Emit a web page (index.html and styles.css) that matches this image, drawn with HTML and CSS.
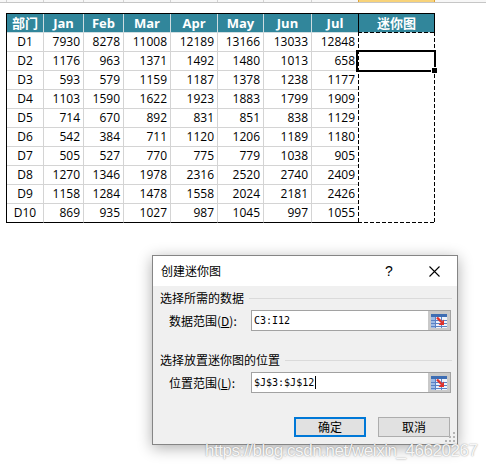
FILE: index.html
```html
<!DOCTYPE html>
<html lang="zh">
<head>
<meta charset="utf-8">
<title>创建迷你图</title>
<link rel="stylesheet" href="styles.css">
</head>
<body>
<div class="sheet">
  <div class="colbar">
    <span></span><span></span><span></span><span></span><span></span><span></span><span></span><span></span><span class="active"></span>
  </div>
  <div class="grid">
    <div class="cell hd">部门</div><div class="cell hd">Jan</div><div class="cell hd">Feb</div><div class="cell hd">Mar</div><div class="cell hd">Apr</div><div class="cell hd">May</div><div class="cell hd">Jun</div><div class="cell hd edge">Jul</div><div class="cell hd edge">迷你图</div>

    <div class="cell dept">D1</div><div class="cell">7930</div><div class="cell">8278</div><div class="cell">11008</div><div class="cell">12189</div><div class="cell">13166</div><div class="cell">13033</div><div class="cell jul">12848</div><div class="cell spark"></div>
    <div class="cell dept">D2</div><div class="cell">1176</div><div class="cell">963</div><div class="cell">1371</div><div class="cell">1492</div><div class="cell">1480</div><div class="cell">1013</div><div class="cell jul">658</div><div class="cell spark"></div>
    <div class="cell dept">D3</div><div class="cell">593</div><div class="cell">579</div><div class="cell">1159</div><div class="cell">1187</div><div class="cell">1378</div><div class="cell">1238</div><div class="cell jul">1177</div><div class="cell spark"></div>
    <div class="cell dept">D4</div><div class="cell">1103</div><div class="cell">1590</div><div class="cell">1622</div><div class="cell">1923</div><div class="cell">1883</div><div class="cell">1799</div><div class="cell jul">1909</div><div class="cell spark"></div>
    <div class="cell dept">D5</div><div class="cell">714</div><div class="cell">670</div><div class="cell">892</div><div class="cell">831</div><div class="cell">851</div><div class="cell">838</div><div class="cell jul">1129</div><div class="cell spark"></div>
    <div class="cell dept">D6</div><div class="cell">542</div><div class="cell">384</div><div class="cell">711</div><div class="cell">1120</div><div class="cell">1206</div><div class="cell">1189</div><div class="cell jul">1180</div><div class="cell spark"></div>
    <div class="cell dept">D7</div><div class="cell">505</div><div class="cell">527</div><div class="cell">770</div><div class="cell">775</div><div class="cell">779</div><div class="cell">1038</div><div class="cell jul">905</div><div class="cell spark"></div>
    <div class="cell dept">D8</div><div class="cell">1270</div><div class="cell">1346</div><div class="cell">1978</div><div class="cell">2316</div><div class="cell">2520</div><div class="cell">2740</div><div class="cell jul">2409</div><div class="cell spark"></div>
    <div class="cell dept">D9</div><div class="cell">1158</div><div class="cell">1284</div><div class="cell">1478</div><div class="cell">1558</div><div class="cell">2024</div><div class="cell">2181</div><div class="cell jul">2426</div><div class="cell spark"></div>
    <div class="cell dept last">D10</div><div class="cell last">869</div><div class="cell last">935</div><div class="cell last">1027</div><div class="cell last">987</div><div class="cell last">1045</div><div class="cell last">997</div><div class="cell jul last">1055</div><div class="cell spark last"></div>

    <div class="ants"></div>
    <div class="selection"><span class="handle"></span></div>
  </div>
</div>

<div class="dialog">
  <div class="titlebar">
    <span class="title">创建迷你图</span>
    <span class="help">?</span>
    <svg class="close" width="11" height="11" viewBox="0 0 11 11"><path d="M0.5 0.5L10.5 10.5M10.5 0.5L0.5 10.5" stroke="#000" stroke-width="1.1"/></svg>
  </div>
  <div class="dbody">
    <div class="group"><span>选择所需的数据</span><i class="rule"></i></div>
    <div class="field">
      <span class="label">数据范围(<u>D</u>):</span>
      <div class="input">
        <span class="val">C3:I12</span>
        <span class="picker">
          <svg width="16" height="14" viewBox="0 0 16 14"><rect width="16" height="14" fill="#eef3fb"/><rect width="16" height="3" fill="#3d6db3"/><rect y="3" width="4" height="11" fill="#9dbbe6"/><path d="M0 6.5H16M0 9.5H16M0 12.5H16M4.5 3V14M10.5 3V14" stroke="#5a82c4"/><path d="M6 3.5L10.5 8" stroke="#e0302a" stroke-width="2.4"/><path d="M13 5.5V11H7.5Z" fill="#e0302a"/></svg>
        </span>
      </div>
    </div>
    <div class="group g2"><span>选择放置迷你图的位置</span><i class="rule"></i></div>
    <div class="field">
      <span class="label">位置范围(<u>L</u>):</span>
      <div class="input">
        <span class="val">$J$3:$J$12<i class="caret"></i></span>
        <span class="picker">
          <svg width="16" height="14" viewBox="0 0 16 14"><rect width="16" height="14" fill="#eef3fb"/><rect width="16" height="3" fill="#3d6db3"/><rect y="3" width="4" height="11" fill="#9dbbe6"/><path d="M0 6.5H16M0 9.5H16M0 12.5H16M4.5 3V14M10.5 3V14" stroke="#5a82c4"/><path d="M6 3.5L10.5 8" stroke="#e0302a" stroke-width="2.4"/><path d="M13 5.5V11H7.5Z" fill="#e0302a"/></svg>
        </span>
      </div>
    </div>
    <div class="buttons">
      <button class="btn primary">确定</button>
      <button class="btn">取消</button>
    </div>
  </div>
  <svg class="grip" width="10" height="10" viewBox="0 0 10 10"><g fill="#b5b5b5"><rect x="8" y="0" width="2" height="2"/><rect x="4" y="4" width="2" height="2"/><rect x="8" y="4" width="2" height="2"/><rect x="0" y="8" width="2" height="2"/><rect x="4" y="8" width="2" height="2"/><rect x="8" y="8" width="2" height="2"/></g></svg>
</div>

<div class="watermark">https://blog.csdn.net/weixin_46620267</div>
</body>
</html>
```

FILE: styles.css
```css
html, body {
  margin: 0;
  padding: 0;
  background: #fff;
}

body {
  width: 486px;
  height: 470px;
  position: relative;
  overflow: hidden;
  font-family: "Noto Sans CJK SC", sans-serif;
}

.sheet {
  padding-left: 6px;
}

/* strip of the column header row above */
.colbar {
  display: grid;
  grid-template-columns: 38px 40px 40px 47px 47px 46px 48px 47px 76px;
  height: 3px;
  margin-left: -6px;
  padding-left: 6px;
  background: #f7f7f7;
  border-bottom: 1px solid #c6c6c6;
  box-sizing: border-box;
  width: 486px;
}

.colbar span {
  border-right: 1px solid #d2d2d2;
}

.colbar span:first-child {
  border-left: 1px solid #d2d2d2;
}

.colbar .active {
  background: #f8d37a;
  border-left: 1px solid #e1a232;
  border-right: 1px solid #e1a232;
  margin-left: -1px;
}

/* data table */
.grid {
  margin-top: 10px;
  display: grid;
  grid-template-columns: 37px 40px 40px 47px 47px 46px 48px 47px 76px;
  grid-auto-rows: 19px;
  width: max-content;
  border-left: 1px solid #000;
  border-top: 1px solid #000;
  position: relative;
  font-family: "Open Sans", "Noto Sans CJK SC", sans-serif;
  font-size: 12px;
  line-height: 18px;
  color: #000;
}

.cell {
  box-sizing: border-box;
  border-right: 1px solid #d4d4d4;
  border-bottom: 1px solid #d4d4d4;
  text-align: right;
  padding-right: 3px;
  white-space: nowrap;
}

.cell.hd {
  background: #31869b;
  color: #fff;
  font-weight: 700;
  font-size: 13px;
  text-align: center;
  padding: 0;
  border-right-color: #cfdde1;
  border-bottom-color: #cfdde1;
}

.cell.hd.edge {
  border-right-color: #000;
}

.cell.dept {
  text-align: center;
  padding: 0;
}

.cell.jul {
  border-right-color: #fff;
}

.cell.spark {
  border-right-color: #fff;
  border-bottom-color: #fff;
}

.cell.last {
  border-bottom-color: #000;
}

.cell.spark.last {
  border-bottom-color: #fff;
}

/* copy marquee around J3:J12 */
.ants {
  position: absolute;
  left: 351px;
  top: 18px;
  width: 77px;
  height: 191px;
  background:
    repeating-linear-gradient(90deg, #000 0 4px, transparent 4px 6px) left top / 100% 1px no-repeat,
    repeating-linear-gradient(90deg, #000 0 4px, transparent 4px 6px) left bottom / 100% 1px no-repeat,
    repeating-linear-gradient(180deg, #000 0 4px, transparent 4px 6px) left top / 1px 100% no-repeat,
    repeating-linear-gradient(180deg, #000 0 4px, transparent 4px 6px) right top / 1px 100% no-repeat;
}

/* active cell */
.selection {
  position: absolute;
  left: 349px;
  top: 36px;
  width: 80px;
  height: 22px;
  box-sizing: border-box;
  border: 2px solid #000;
}

.handle {
  position: absolute;
  right: -4px;
  bottom: -4px;
  width: 5px;
  height: 5px;
  background: #000;
  border: 1px solid #fff;
}

/* dialog window */
.dialog {
  position: absolute;
  left: 152px;
  top: 255px;
  width: 306px;
  height: 190px;
  box-sizing: border-box;
  border: 1px solid #858585;
  background: #f0f0f0;
  box-shadow: 0 3px 14px rgba(0, 0, 0, 0.32);
  font-size: 12px;
  color: #000;
}

.titlebar {
  height: 30px;
  background: #fff;
  display: flex;
  align-items: center;
  padding: 0 17px 0 8px;
}

.title {
  flex: 1;
  line-height: 16px;
}

.help {
  width: 12px;
  text-align: center;
  font-family: "Liberation Sans", sans-serif;
  font-size: 14px;
  margin-right: 34px;
}

.close {
  display: block;
}

.dbody {
  padding: 4px 5px 0 5px;
}

.group {
  display: flex;
  align-items: center;
  gap: 5px;
  height: 16px;
  line-height: 16px;
  padding-left: 2px;
}

.group.g2 {
  margin-top: 21px;
}

.rule {
  flex: 1;
  height: 1px;
  background: #dadada;
}

.field {
  display: flex;
  align-items: center;
  margin-top: 4px;
  padding-left: 11px;
  height: 21px;
}

.label {
  width: 82px;
  line-height: 16px;
  white-space: nowrap;
}

.input {
  width: 200px;
  height: 21px;
  box-sizing: border-box;
  border: 1px solid #a2a2a2;
  background: #fff;
  display: flex;
  align-items: stretch;
}

.val {
  flex: 1;
  font-family: "DejaVu Sans Mono", monospace;
  font-size: 10px;
  line-height: 19px;
  padding-left: 2px;
  display: flex;
  align-items: center;
}

.caret {
  width: 1px;
  height: 13px;
  background: #000;
  margin-left: 1px;
}

.picker {
  width: 22px;
  background: #c9c9c9;
  display: flex;
  align-items: center;
  justify-content: center;
}

.picker svg {
  display: block;
}

.buttons {
  display: flex;
  justify-content: flex-end;
  gap: 12px;
  margin-top: 24px;
  padding-right: 2px;
}

.btn {
  width: 72px;
  height: 20px;
  box-sizing: border-box;
  background: #e1e1e1;
  border: 1px solid #adadad;
  font-family: "Noto Sans CJK SC", sans-serif;
  font-size: 12px;
  line-height: 16px;
  padding: 0;
  color: #000;
}

.btn.primary {
  border: 2px solid #0078d7;
}

.grip {
  position: absolute;
  right: 2px;
  bottom: 2px;
}

/* blog watermark */
.watermark {
  position: absolute;
  left: 205px;
  top: 441px;
  font-family: "Liberation Sans", Arial, sans-serif;
  font-size: 17px;
  line-height: 20px;
  letter-spacing: -0.45px;
  color: rgba(255, 255, 255, 0.92);
  text-shadow: 0 0 1.5px rgba(0, 0, 0, 0.45);
  white-space: nowrap;
}
```
